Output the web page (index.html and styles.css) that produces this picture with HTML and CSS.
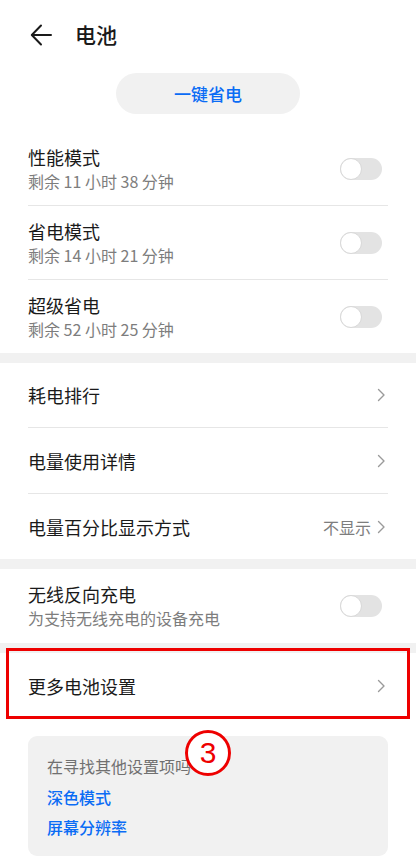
FILE: index.html
```html
<!DOCTYPE html>
<html lang="zh-CN">
<head>
<meta charset="utf-8">
<link rel="stylesheet" href="styles.css">
</head>
<body>
<div class="page">
  <header class="topbar">
    <svg class="back" width="22" height="22" viewBox="0 0 22 22"><path d="M11 1.5 L1.8 11 L11 20.5 M2 11 H21" fill="none" stroke="#1a1a1a" stroke-width="2" stroke-linecap="round" stroke-linejoin="round"/></svg>
    <h1 class="title">电池</h1>
  </header>
  <div class="btn-wrap"><div class="save-btn">一键省电</div></div>

  <section class="group first">
    <div class="row two">
      <div class="texts"><div class="t">性能模式</div><div class="s">剩余 11 小时 38 分钟</div></div>
      <div class="toggle"><span class="knob"></span></div>
    </div>
    <div class="row two">
      <div class="texts"><div class="t">省电模式</div><div class="s">剩余 14 小时 21 分钟</div></div>
      <div class="toggle"><span class="knob"></span></div>
    </div>
    <div class="row two last short">
      <div class="texts"><div class="t">超级省电</div><div class="s">剩余 52 小时 25 分钟</div></div>
      <div class="toggle"><span class="knob"></span></div>
    </div>
  </section>
  <div class="band"></div>
  <section class="group">
    <div class="row one">
      <div class="t">耗电排行</div>
      <svg class="chev" width="9" height="14" viewBox="0 0 9 14"><path d="M1.5 1.5 L7 7 L1.5 12.5" fill="none" stroke="#9a9a9a" stroke-width="1.4" stroke-linecap="round" stroke-linejoin="round"/></svg>
    </div>
    <div class="row one tall">
      <div class="t">电量使用详情</div>
      <svg class="chev" width="9" height="14" viewBox="0 0 9 14"><path d="M1.5 1.5 L7 7 L1.5 12.5" fill="none" stroke="#9a9a9a" stroke-width="1.4" stroke-linecap="round" stroke-linejoin="round"/></svg>
    </div>
    <div class="row one last">
      <div class="t">电量百分比显示方式</div>
      <div class="right"><span class="val">不显示</span><svg class="chev" width="9" height="14" viewBox="0 0 9 14"><path d="M1.5 1.5 L7 7 L1.5 12.5" fill="none" stroke="#9a9a9a" stroke-width="1.4" stroke-linecap="round" stroke-linejoin="round"/></svg></div>
    </div>
  </section>
  <div class="band"></div>
  <section class="group">
    <div class="row two last">
      <div class="texts"><div class="t">无线反向充电</div><div class="s">为支持无线充电的设备充电</div></div>
      <div class="toggle"><span class="knob"></span></div>
    </div>
  </section>
  <div class="band"></div>
  <section class="group more">
    <div class="row one tall last">
      <div class="t">更多电池设置</div>
      <svg class="chev" width="9" height="14" viewBox="0 0 9 14"><path d="M1.5 1.5 L7 7 L1.5 12.5" fill="none" stroke="#9a9a9a" stroke-width="1.4" stroke-linecap="round" stroke-linejoin="round"/></svg>
    </div>
    <div class="highlight"></div>
  </section>

  <div class="card">
    <div class="q">在寻找其他设置项吗</div>
    <div class="link">深色模式</div>
    <div class="link">屏幕分辨率</div>
    <div class="badge">3</div>
  </div>
</div>
</body>
</html>
```

FILE: styles.css
```css
* { box-sizing: border-box; }
html, body { margin: 0; padding: 0; background: #fff; }
body {
  font-family: "Noto Sans CJK SC", "Noto Sans", sans-serif;
  color: #1a1a1a;
}
.page { width: 416px; height: 868px; overflow: hidden; position: relative; }

.topbar {
  height: 70px;
  display: flex;
  align-items: center;
  padding-left: 30px;
}
.back { display: block; }
.title {
  margin: -2px 0 0 23px;
  font-size: 21px;
  font-weight: 500;
  line-height: 1;
  color: #1a1a1a;
}

.btn-wrap { display: flex; justify-content: center; margin-top: 3px; }
.save-btn {
  width: 184px;
  height: 41px;
  border-radius: 21px;
  background: #f1f1f1;
  color: #0a6cf5;
  font-size: 17px;
  font-weight: 500;
  display: flex;
  align-items: center;
  justify-content: center;
}

.group { padding: 0 28px; }
.group.first { margin-top: 18px; }
.band { height: 10px; background: #f1f1f1; }

.row {
  display: flex;
  align-items: center;
  justify-content: space-between;
  border-bottom: 1px solid #e6e6e6;
}
.row.last { border-bottom: none; }
.row.two { height: 74px; }
.row.two.short { height: 73px; }
.row.one { height: 65px; }
.row.one.tall { height: 66px; }

.t { font-size: 18px; line-height: 24px; color: #1a1a1a; }
.row.two .t { margin-top: -2px; }
.s { font-size: 16px; line-height: 20px; color: #7d7d7d; margin-top: 2px; }

.toggle {
  width: 42px;
  height: 22px;
  border-radius: 11px;
  background: #e3e3e3;
  position: relative;
  margin-right: 6px;
}
.knob {
  position: absolute;
  left: 0;
  top: 0;
  width: 22px;
  height: 22px;
  border-radius: 50%;
  background: #fff;
  border: 1px solid #d8d8d8;
}

.chev { display: block; margin-right: 2px; }
.right { display: flex; align-items: center; gap: 6px; }
.val { font-size: 16px; color: #7d7d7d; }

.more { position: relative; }
.highlight {
  position: absolute;
  left: 6px;
  top: -5px;
  width: 404px;
  height: 71px;
  border: 3px solid #ee0000;
  pointer-events: none;
}

.card {
  position: relative;
  margin: 17px 28px 0;
  height: 120px;
  border-radius: 9px;
  background: #f1f1f1;
  padding: 20px 19px 0;
}
.q { font-size: 16px; line-height: 20px; color: #707070; }
.link { font-size: 16px; line-height: 20px; color: #0a6cf5; margin-top: 11px; font-weight: 500; }
.link + .link { margin-top: 10px; }
.badge {
  position: absolute;
  left: 157px;
  top: -6px;
  width: 46px;
  height: 46px;
  border: 3px solid #ee0000;
  border-radius: 50%;
  background: #fff;
  color: #ee0000;
  font-family: "Liberation Sans", "Noto Sans", sans-serif;
  font-size: 30px;
  line-height: 40px;
  text-align: center;
}
```
